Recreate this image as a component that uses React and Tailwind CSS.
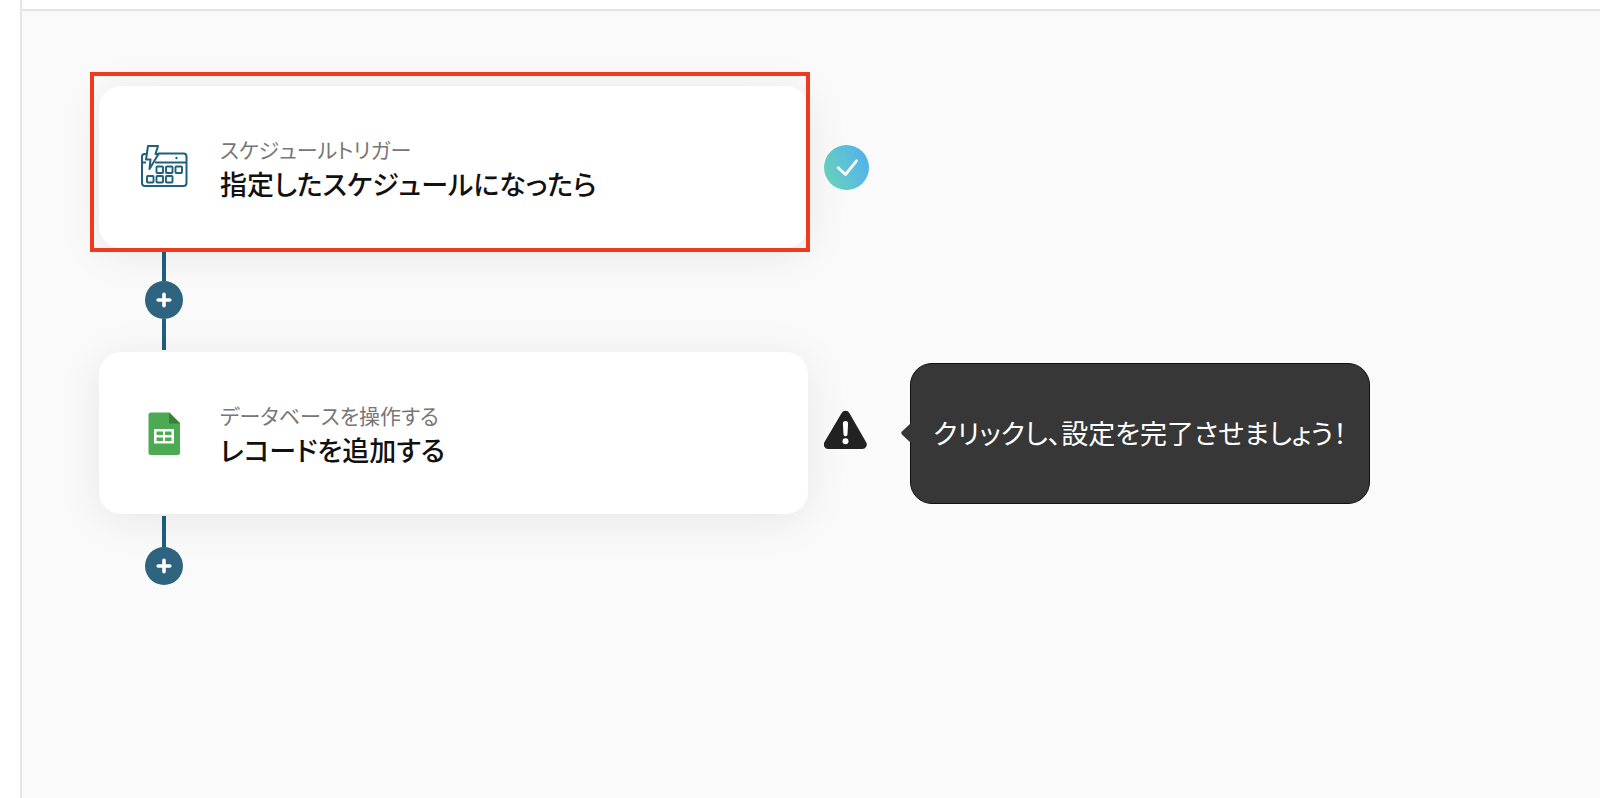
// ============================================================
// Flow Editor
// Vertical list of flow steps joined by "add step" connectors
// ============================================================

const ScheduleIcon = () => (
  <svg className="h-12 w-12" viewBox="0 0 48 48" fill="none" stroke="#1f607c" strokeWidth="2" strokeLinejoin="round" aria-hidden="true">
    <path d="M6 11H4.500a2.500 2.500 0 0 0-2.500 2.500V40a3 3 0 0 0 3 3h38.500a3 3 0 0 0 3-3V13.500a3 3 0 0 0-3-3H18" />
    <path d="M2 19.500H6M15 19.500H46.500" />
    <g strokeWidth="1.900">
      <rect x="16.500" y="23.500" width="6.500" height="6.500" rx="0.800" />
      <rect x="26" y="23.500" width="6.500" height="6.500" rx="0.800" />
      <rect x="35.500" y="23.500" width="6.500" height="6.500" rx="0.800" />
      <rect x="7" y="33" width="6.500" height="6.500" rx="0.800" />
      <rect x="16.500" y="33" width="6.500" height="6.500" rx="0.800" />
      <rect x="26" y="33" width="6.500" height="6.500" rx="0.800" />
    </g>
    <path d="M8 3h10l-2.500 8h3L9.500 26l1-9.500H6L8 3Z" fill="#fff" />
    <circle cx="36.500" cy="15" r="1.200" fill="#1f607c" stroke="none" />
  </svg>
);

const SheetsIcon = () => (
  <svg className="h-12 w-12" viewBox="0 0 48 48" aria-hidden="true">
    <path d="M11 3.500h18.500L40 14v29.500a2.500 2.500 0 0 1-2.500 2.500H11a2.500 2.500 0 0 1-2.500-2.500V6A2.500 2.500 0 0 1 11 3.500Z" fill="#4caa53" />
    <path d="M29 3.500 40 14.500H29Z" fill="#388035" />
    <path d="M14 20h20v14.500H14Z" fill="#fff" />
    <path d="M16.500 22.500h6.500v3.500h-6.500ZM25 22.500h6.500v3.500H25ZM16.500 28.500h6.500V32h-6.500ZM25 28.500h6.500V32H25Z" fill="#4caa53" />
  </svg>
);

const CheckBadge = () => (
  <svg className="h-[45px] w-[45px] shrink-0" viewBox="0 0 45 45" role="img" aria-label="設定済み">
    <defs>
      <linearGradient id="check-fill" x1="0" y1="0.700" x2="1" y2="0.300">
        <stop offset="0" stopColor="#68d4bd" />
        <stop offset="1" stopColor="#52b1ec" />
      </linearGradient>
    </defs>
    <circle cx="22.500" cy="22.500" r="22.500" fill="url(#check-fill)" />
    <path d="M14.200 22.800 21.500 29.500 32.500 15.800" fill="none" stroke="#fff" strokeWidth="2.800" strokeLinecap="round" strokeLinejoin="round" />
  </svg>
);

const WarningIcon = () => (
  <svg className="mb-1.5 h-10 w-11 shrink-0" viewBox="0 0 44 40" role="img" aria-label="未設定">
    <path d="M17.500 3.200a4.600 4.600 0 0 1 8 0L42 32a4.500 4.500 0 0 1-4 7H4.500a4.500 4.500 0 0 1-4-7Z" fill="#222" />
    <path d="M18.900 13.500a2.500 2.500 0 0 1 5.200 0l-.6 10.800a2 2 0 0 1-4 0Z" fill="#fff" />
    <circle cx="21.500" cy="31.200" r="3" fill="#fff" />
  </svg>
);

const AddButton = () => (
  <button type="button" aria-label="ステップを追加" className="flex h-[38px] w-[38px] items-center justify-center rounded-full bg-[#2e647f]">
    <svg className="h-4 w-4" viewBox="0 0 16 16" stroke="#fff" strokeWidth="3.600" strokeLinecap="round" aria-hidden="true">
      <path d="M8 2.200v11.600M2.200 8h11.600" />
    </svg>
  </button>
);

const Line = () => <span className="h-[31px] w-1 bg-[#1f607c]" />;

const Connector = ({ last }) => (
  <div className="ml-[46px] flex w-[38px] flex-col items-center py-0.5">
    <Line />
    <AddButton />
    {!last && <Line />}
  </div>
);

const StepCard = ({ icon, label, title, selected }) => (
  <button
    type="button"
    className="relative flex h-[162px] w-full max-w-[709px] items-center gap-8 rounded-[22px] bg-white pl-[41px] text-left shadow-[0_6px_44px_rgba(0,0,0,0.08)]"
  >
    {icon}
    <span className="flex flex-col pt-0.5">
      <span className="text-[21px] leading-8 text-[#777]">{label}</span>
      <span className="text-[27px] leading-[38px] font-medium text-[#111]">{title}</span>
    </span>
    {selected && (
      <span className="pointer-events-none absolute -top-[14px] -right-[2px] -bottom-[4px] -left-[9px] border-4 border-[#ee3a1f]" />
    )}
  </button>
);

const Tooltip = ({ children }) => (
  <div className="relative ml-[26px] flex h-[141px] shrink-0 items-center rounded-[22px] border border-[#111] bg-[#373737] px-[22px] text-[27px] text-white">
    <svg className="absolute top-1/2 -left-[10px] h-[22px] w-[11px] -translate-y-1/2" viewBox="0 0 11 22" fill="#373737" aria-hidden="true">
      <path d="M11 0 1.200 9.300a2.300 2.300 0 0 0 0 3.400L11 22Z" />
    </svg>
    <p className="whitespace-nowrap">{children}</p>
  </div>
);

const App = () => {
  return (
    <div className="flex min-h-screen bg-white font-['Noto_Sans_CJK_JP',sans-serif] [font-feature-settings:'palt'] [font-kerning:none]">
      {/* Left rail */}
      <aside className="w-[22px] shrink-0 border-r-2 border-[#e6e6e6]" />

      <div className="flex min-w-0 flex-1 flex-col">
        <header className="h-[11px] border-b-2 border-[#e4e4e4]" />

        {/* Canvas */}
        <main className="flex-1 bg-[#fafafa] pt-[75px] pl-[77px]">
          <div className="flex items-center gap-4">
            <StepCard icon={<ScheduleIcon />} label="スケジュールトリガー" title="指定したスケジュールになったら" selected />
            <CheckBadge />
          </div>

          <Connector />

          <div className="flex items-center gap-4">
            <StepCard icon={<SheetsIcon />} label="データベースを操作する" title="レコードを追加する" />
            <WarningIcon />
            <Tooltip>クリックし、設定を完了させましょう！</Tooltip>
          </div>

          <Connector last />
        </main>
      </div>
    </div>
  );
};

export default App;
